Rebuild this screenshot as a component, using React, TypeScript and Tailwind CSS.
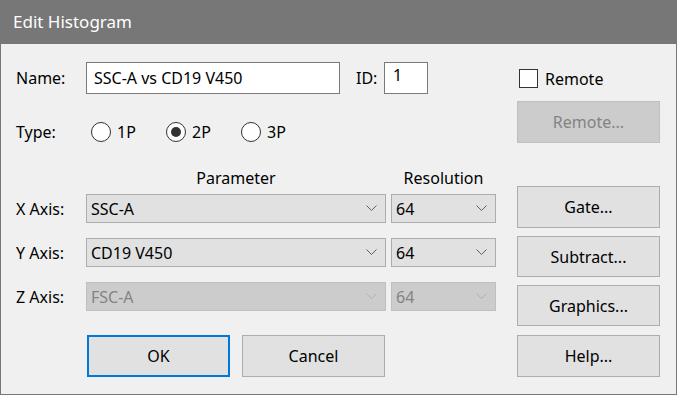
import React from "react";

const font = { fontFamily: '"Segoe UI", "Noto Sans", "Open Sans", sans-serif' };

const Chevron: React.FC<{ disabled?: boolean }> = ({ disabled }) => (
  <svg width="11" height="7" viewBox="0 0 11 7" className="shrink-0">
    <polyline points="0.5,0.5 5.5,5.5 10.5,0.5" fill="none" stroke={disabled ? "#b0b0b0" : "#606060"} strokeWidth="1" />
  </svg>
);

const Combo: React.FC<{ value: string; width: string; disabled?: boolean }> = ({ value, width, disabled }) => (
  <div
    className={`${width} h-[29px] flex items-center justify-between pl-[4px] pr-[8px] border ${
      disabled ? "bg-[#cccccc] border-[#bfbfbf] text-[#838383]" : "bg-[#e1e1e1] border-[#adadad] text-black"
    }`}
  >
    <span>{value}</span>
    <Chevron disabled={disabled} />
  </div>
);

const Button: React.FC<{ label: string; className?: string; disabled?: boolean; focused?: boolean }> = ({
  label,
  className = "",
  disabled,
  focused,
}) => (
  <div
    className={`w-[143px] flex items-center justify-center ${
      focused ? "border-2 border-[#0078d7] bg-[#e1e1e1]" : disabled ? "border border-[#bfbfbf] bg-[#cccccc] text-[#838383]" : "border border-[#adadad] bg-[#e1e1e1]"
    } ${className}`}
  >
    {label}
  </div>
);

const Radio: React.FC<{ label: string; checked?: boolean }> = ({ label, checked }) => (
  <div className="w-[75px] flex items-center gap-[6px]">
    <div className="w-[20px] h-[20px] rounded-full border border-[#333333] bg-white flex items-center justify-center">
      {checked && <div className="w-[10px] h-[10px] rounded-full bg-[#333333]" />}
    </div>
    <span>{label}</span>
  </div>
);

export default function App() {
  return (
    <div style={font} className="w-[677px] h-[395px] border border-t-0 border-[#777777] bg-[#f0f0f0] text-[16px] text-black flex flex-col">
      <div className="h-[44px] bg-[#777777] text-white text-[17px] flex items-center pl-[12px] shrink-0">Edit Histogram</div>
      <div className="flex pl-[15px] pr-[15px]">
        {/* left */}
        <div className="w-[480px] flex flex-col">
          <div className="mt-[18px] h-[32px] flex items-center">
            <span className="w-[70px]">Name:</span>
            <div className="w-[254px] h-[32px] bg-white border border-[#7a7a7a] flex items-center pl-[7px]">SSC-A vs CD19 V450</div>
            <span className="ml-[16px] w-[28px]">ID:</span>
            <div className="w-[44px] h-[32px] bg-white border border-[#7a7a7a] flex items-center pl-[8px] pb-[6px]">1</div>
          </div>
          <div className="mt-[28px] h-[20px] flex items-center">
            <span className="w-[75px]">Type:</span>
            <Radio label="1P" />
            <Radio label="2P" checked />
            <Radio label="3P" />
          </div>
          <div className="mt-[26px] h-[20px] flex items-center">
            <span className="w-[70px]" />
            <span className="w-[300px] text-center">Parameter</span>
            <span className="ml-[5px] w-[105px] text-center">Resolution</span>
          </div>
          {[
            { label: "X Axis:", p: "SSC-A", d: false, mt: "mt-[6px]" },
            { label: "Y Axis:", p: "CD19 V450", d: false, mt: "mt-[15px]" },
            { label: "Z Axis:", p: "FSC-A", d: true, mt: "mt-[15px]" },
          ].map((r) => (
            <div key={r.label} className={`${r.mt} flex items-center`}>
              <span className="w-[70px]">{r.label}</span>
              <Combo value={r.p} width="w-[300px]" disabled={r.d} />
              <div className="ml-[5px]">
                <Combo value="64" width="w-[105px]" disabled={r.d} />
              </div>
            </div>
          ))}
          <div className="mt-[24px] flex pl-[71px] gap-[12px]">
            <Button label="OK" focused className="h-[42px]" />
            <Button label="Cancel" className="h-[42px]" />
          </div>
        </div>
        {/* right */}
        <div className="ml-[21px] w-[143px] flex flex-col">
          <div className="mt-[25px] h-[19px] flex items-center gap-[7px] pl-[2px]">
            <div className="w-[19px] h-[19px] border border-[#333333] bg-white" />
            <span>Remote</span>
          </div>
          <Button label="Remote..." disabled className="mt-[13px] h-[42px]" />
          <Button label="Gate..." className="mt-[43px] h-[42px]" />
          <Button label="Subtract..." className="mt-[8px] h-[41px]" />
          <Button label="Graphics..." className="mt-[8px] h-[41px]" />
          <Button label="Help..." className="mt-[9px] h-[42px]" />
        </div>
      </div>
    </div>
  );
}
